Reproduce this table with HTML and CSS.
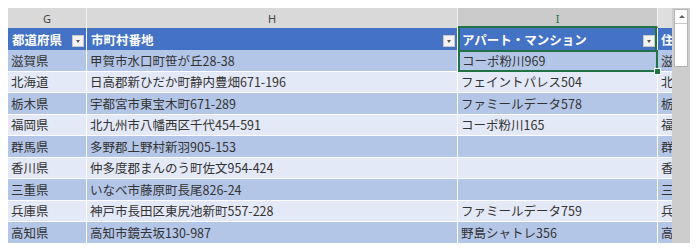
FILE: index.html
```html
<!DOCTYPE html>
<html lang="ja">
<head>
<meta charset="utf-8">
<link rel="stylesheet" href="styles.css">
</head>
<body>
<div class="wrap">
  <div class="sheet">
    <div class="ch">G</div>
    <div class="ch">H</div>
    <div class="ch ch-sel">I</div>
    <div class="ch ch-last"></div>

    <div class="hd"><span>都道府県</span><i class="flt"></i></div>
    <div class="hd"><span>市町村番地</span><i class="flt"></i></div>
    <div class="hd hd-sel"><span>アパート・マンション</span><i class="flt"></i></div>
    <div class="hd hd-last"><span>住所</span></div>

    <div class="c a">滋賀県</div><div class="c a">甲賀市水口町笹が丘28-38</div><div class="c a act">コーポ粉川969<i class="handle"></i></div><div class="c a last">滋賀県</div>
    <div class="c b">北海道</div><div class="c b">日高郡新ひだか町静内豊畑671-196</div><div class="c b">フェイントパレス504</div><div class="c b last">北海道</div>
    <div class="c a">栃木県</div><div class="c a">宇都宮市東宝木町671-289</div><div class="c a">ファミールデータ578</div><div class="c a last">栃木県</div>
    <div class="c b">福岡県</div><div class="c b">北九州市八幡西区千代454-591</div><div class="c b">コーポ粉川165</div><div class="c b last">福岡県</div>
    <div class="c a">群馬県</div><div class="c a">多野郡上野村新羽905-153</div><div class="c a"></div><div class="c a last">群馬県</div>
    <div class="c b">香川県</div><div class="c b">仲多度郡まんのう町佐文954-424</div><div class="c b"></div><div class="c b last">香川県</div>
    <div class="c a">三重県</div><div class="c a">いなべ市藤原町長尾826-24</div><div class="c a"></div><div class="c a last">三重県</div>
    <div class="c b">兵庫県</div><div class="c b">神戸市長田区東尻池新町557-228</div><div class="c b">ファミールデータ759</div><div class="c b last">兵庫県</div>
    <div class="c a">高知県</div><div class="c a">高知市鏡去坂130-987</div><div class="c a">野島シャトレ356</div><div class="c a last">高知県</div>
  </div>
  <div class="vscroll">
    <div class="thumb">
      <div class="up"></div>
    </div>
  </div>
</div>
</body>
</html>
```

FILE: styles.css
```css
html, body {
  margin: 0;
  padding: 0;
  background: #ffffff;
}

.wrap {
  display: flex;
  align-items: flex-start;
  padding: 8px 0 0 8px;
}

.sheet {
  display: grid;
  grid-template-columns: 79px 371px 200px 14px;
  grid-template-rows: 20px 22px repeat(9, 21.5px);
  width: 664px;
  font-family: "Noto Sans CJK JP", "Noto Sans", sans-serif;
  font-size: 12.5px;
  color: #333333;
  overflow: hidden;
}

.ch {
  background: #d9d9d9;
  border-right: 1px solid #f2f2f2;
  color: #444444;
  font-family: "Noto Sans", "Liberation Sans", sans-serif;
  font-size: 11px;
  display: flex;
  align-items: center;
  justify-content: center;
  box-sizing: border-box;
}

.ch-sel {
  background: #cbcbcb;
  color: #217346;
  border-bottom: 2px solid #217346;
  padding-top: 2px;
}

.ch-last {
  border-right: none;
  background: #dedede;
}

.hd {
  background: #4472c4;
  color: #ffffff;
  font-weight: bold;
  display: flex;
  align-items: center;
  justify-content: space-between;
  padding: 0 2px 0 4px;
  border-right: 1px solid #ffffff;
  box-sizing: border-box;
  white-space: nowrap;
  overflow: hidden;
}

.hd-sel {
  box-shadow: inset 2px 0 0 #217346, inset -2px 0 0 #217346;
}

.hd-last {
  border-right: none;
  padding-left: 3px;
}

.flt {
  display: block;
  width: 12px;
  height: 12px;
  margin-top: 4px;
  box-sizing: border-box;
  background: #f3f3f3;
  border: 1px solid #c8c8c8;
  position: relative;
  flex: none;
}

.flt::after {
  content: "";
  position: absolute;
  left: 3px;
  top: 4px;
  border-left: 2.5px solid transparent;
  border-right: 2.5px solid transparent;
  border-top: 3px solid #555555;
}

.c {
  display: flex;
  align-items: center;
  padding-left: 3px;
  border-right: 1px solid #ffffff;
  border-bottom: 1px solid #ffffff;
  box-sizing: border-box;
  white-space: nowrap;
  overflow: hidden;
  position: relative;
}

.a {
  background: #b4c6e7;
}

.b {
  background: #e3e9f7;
}

.last {
  border-right: none;
}

.act {
  overflow: visible;
  padding-left: 4px;
  border: none;
  box-shadow: inset 0 0 0 2px #217346;
}

.handle {
  position: absolute;
  right: -3px;
  bottom: -3px;
  width: 5px;
  height: 5px;
  background: #217346;
  border: 1px solid #ffffff;
  z-index: 2;
}

.vscroll {
  width: 18px;
  height: 235px;
  background: #cdcdcd;
  box-sizing: border-box;
  padding: 1px 2px 0 2px;
}

.thumb {
  height: 58px;
  background: #ffffff;
  border: 1px solid #b5b5b5;
  box-sizing: border-box;
}

.up {
  height: 13px;
  border-bottom: 1px solid #c8c8c8;
  position: relative;
}

.up::after {
  content: "";
  position: absolute;
  left: 4px;
  top: 5px;
  border-left: 3px solid transparent;
  border-right: 3px solid transparent;
  border-bottom: 3px solid #606060;
}
```
